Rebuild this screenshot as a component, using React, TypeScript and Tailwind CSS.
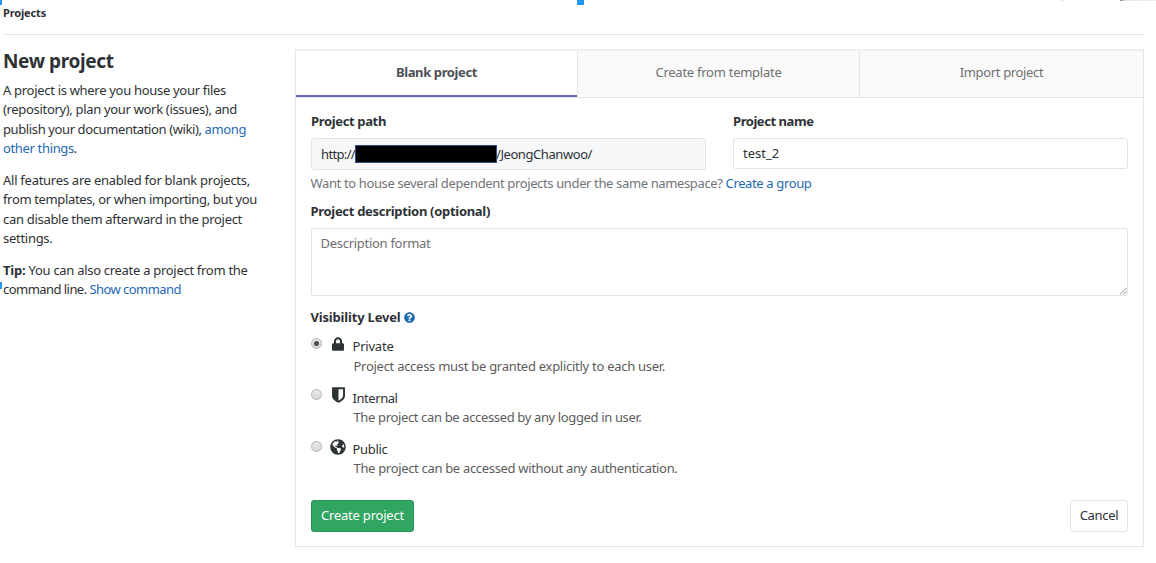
import type { ReactNode } from "react";
import { FaGlobeAmericas, FaLock, FaQuestionCircle } from "react-icons/fa";

function ShieldIcon() {
  return (
    <svg viewBox="256 128 1280 1536" className="h-[16px] w-[13px]" fill="currentColor">
      <path d="M1344 960V320h-448v1137q119-63 213-137 235-184 235-360zm192-768v768q0 86-33.5 170.5t-83 150-118 127.5-126.5 103-121 77.5-89.5 49.5-42.5 20q-12 6-26 6t-26-6q-16-7-42.5-20t-89.5-49.5-121-77.5-126.5-103-118-127.5-83-150-33.5-170.5V192q0-26 19-45t45-19h1152q26 0 45 19t19 45z" />
    </svg>
  );
}

function Radio({ checked = false }: { checked?: boolean }) {
  return (
    <span className="flex size-[11px] shrink-0 items-center justify-center rounded-full border border-[#b4b4b4] bg-linear-to-b from-[#e9e9e9] to-[#d8d8d8]">
      {checked && <span className="size-[5px] rounded-full bg-[#4c4c4c]" />}
    </span>
  );
}

type OptionProps = { icon: ReactNode; label: ReactNode; text: ReactNode; checked?: boolean };

function Option({ icon, label, text, checked }: OptionProps) {
  return (
    <div className="flex h-[51.300px] items-start">
      <div className="pt-[4px]">
        <Radio checked={checked} />
      </div>
      <div className="ml-[8px] flex h-[20px] w-[16px] items-center justify-center text-[#2e3436]">{icon}</div>
      <div className="ml-[6.500px] pt-[3.300px]">
        <div>{label}</div>
        <div className="pl-px text-[#5c5c5c]">{text}</div>
      </div>
    </div>
  );
}

export default function App() {
  return (
    <div className="flex h-[563px] w-[1156px] flex-col overflow-hidden bg-white pr-[12px] pl-[3px] font-['Noto_Sans',sans-serif] text-[13px] leading-[19.300px] whitespace-nowrap text-[#2e3236]">
      <span className="absolute top-0 left-0 h-[5px] w-[2px] bg-[#2196f3]" />
      <span className="absolute top-0 left-[577px] h-[5px] w-[7px] bg-[#2196f3]" />
      <span className="absolute top-[282px] left-0 h-[7px] w-[2px] bg-[#2196f3]" />
      <span className="absolute top-0 left-[1062px] size-px bg-[#bbb]" />
      <span className="absolute top-0 left-[1120px] h-px w-[36px] bg-linear-to-r from-[#888] via-[#e8e8e8] via-15% to-[#eee]" />

      <header className="h-[35px] border-b border-[#e5e5e5] pt-[2.600px] text-[11px] font-bold tracking-[-0.152px]">Projects</header>

      <div className="flex">
        <aside className="w-[292px] pt-[14px]">
          <h1 className="h-[32px] text-[19px] leading-[24px] font-bold tracking-[-0.379px]">New project</h1>
          <p className="mb-[12.800px]">
            <span className="block tracking-[-0.303px]">A project is where you house your files</span>
            <span className="block tracking-[-0.324px]">(repository), plan your work (issues), and</span>
            <span className="block tracking-[-0.387px]">
              publish your documentation (wiki), <a className="text-[#1f69b3]">among</a>
            </span>
            <span className="block tracking-[-0.346px]">
              <a className="text-[#1f69b3]">other things</a>.
            </span>
          </p>
          <p className="mb-[12.800px]">
            <span className="block tracking-[-0.261px]">All features are enabled for blank projects,</span>
            <span className="block tracking-[-0.353px]">from templates, or when importing, but you</span>
            <span className="block tracking-[-0.303px]">can disable them afterward in the project</span>
            <span className="block tracking-[-0.282px]">settings.</span>
          </p>
          <p>
            <span className="block tracking-[-0.292px]">
              <b className="tracking-[-0.200px]">Tip:</b> You can also create a project from the
            </span>
            <span className="block tracking-[-0.545px]">
              command line. <a className="text-[#1f69b3]">Show command</a>
            </span>
          </p>
        </aside>

        <main className="mt-[14px] h-[498px] w-[849px] border border-t-2 border-[#e5e5e5] border-t-[#efefef]">
          <nav className="flex h-[47px] border-b border-[#e5e5e5] text-[#707070]">
            <div className="flex w-[281px] items-center justify-center border-b-2 border-[#6666c4] font-bold tracking-[-0.390px] text-[#4c5055]">
              Blank project
            </div>
            <div className="flex w-[283px] items-center justify-center border-x border-[#e5e5e5] bg-[#fafafa] pb-[3px] tracking-[-0.259px]">Create from template</div>
            <div className="flex flex-1 items-center justify-center bg-[#fafafa] pb-[3px] tracking-[-0.354px]">Import project</div>
          </nav>

          <div className="px-[15px]">
            <div className="flex justify-between pt-[14px]">
              <div className="w-[395px]">
                <div className="mb-[7px] font-bold tracking-[-0.351px]">
                  Project path
                </div>
                <div className="flex h-[32px] items-center rounded-[3px] border border-[#e5e5e5] bg-[#f6f7f9] pl-[9px]">
                  <span className="w-[34px] tracking-[-0.653px]">http://</span>
                  <span className="h-[18px] w-[142px] shrink-0 border border-[#2f528f] bg-black" />
                  <span className="-ml-px tracking-[-0.427px]">/JeongChanwoo/</span>
                </div>
              </div>
              <div className="w-[395px]">
                <div className="mb-[7px] font-bold tracking-[-0.441px]">Project name</div>
                <div className="flex h-[31px] items-center rounded-[3px] border border-[#e3e3e3] pl-[9px]">test_2</div>
              </div>
            </div>
            <div className="mt-[3px] -ml-[0.500px] pt-[0.600px] tracking-[-0.367px] text-[#707478]">
              Want to house several dependent projects under the same namespace? <a className="text-[#1f69b3]">Create a group</a>
            </div>

            <div className="mt-[8.400px] -ml-[0.500px] font-bold tracking-[-0.305px]">Project description (optional)</div>
            <div className="relative mt-[7px] h-[68px] rounded-[2px] border border-[#e3e3e3] px-[8.500px] pt-[5px] tracking-[-0.288px] text-[#707070]">
              Description format
              <svg viewBox="0 0 8 8" className="absolute right-0 bottom-0 size-[8px]" stroke="#8a8a8a">
                <path d="M1 7.500 7.500 1M4.500 7.500 7.500 4.500" />
              </svg>
            </div>

            <div className="mt-[12px] -ml-[0.500px] flex items-center gap-[3.500px] font-bold tracking-[-0.180px]">
              Visibility Level
              <FaQuestionCircle className="size-[11px] text-[#1f69b3]" />
            </div>

            <div className="mt-[7px]">
              <Option
                checked
                icon={<FaLock className="h-[14px] w-[12px]" />}
                label={<span className="tracking-[-0.216px]">Private</span>}
                text={<span className="tracking-[-0.276px]">Project access must be granted explicitly to each user.</span>}
              />
              <Option
                icon={<ShieldIcon />}
                label={<span className="tracking-[-0.440px]">Internal</span>}
                text={<span className="tracking-[-0.360px]">The project can be accessed by any logged in user.</span>}
              />
              <Option
                icon={<FaGlobeAmericas className="size-[16px]" />}
                label={<span className="tracking-[-0.307px]">Public</span>}
                text={<span className="tracking-[-0.325px]">The project can be accessed without any authentication.</span>}
              />
            </div>

            <div className="mt-[12px] flex justify-between">
              <button className="h-[32px] w-[103px] rounded-[3px] border border-[#2a9055] bg-[#31a562] tracking-[-0.210px] text-white">Create project</button>
              <button className="h-[32px] w-[58px] rounded-[3px] border border-[#e3e3e3] tracking-[-0.328px]">Cancel</button>
            </div>
          </div>
        </main>
      </div>
    </div>
  );
}
